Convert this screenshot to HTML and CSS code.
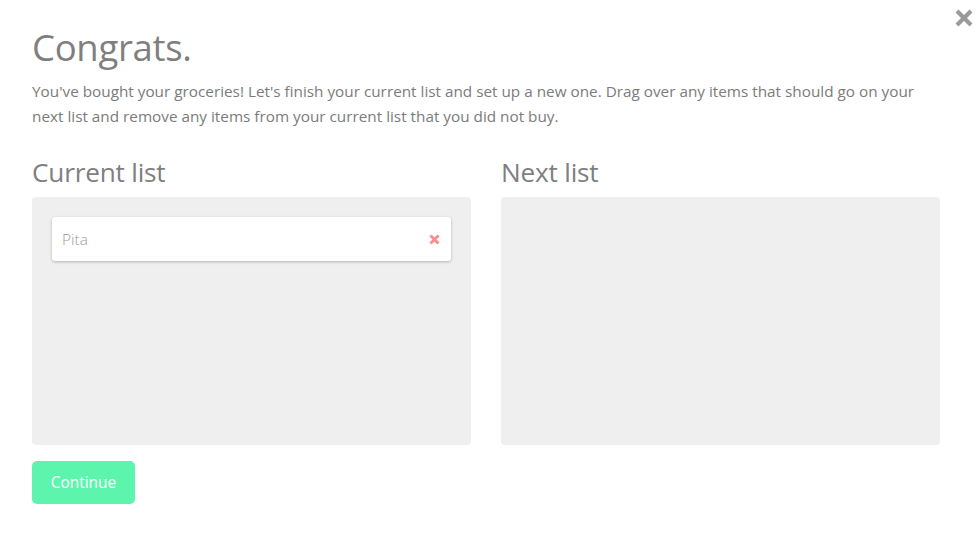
FILE: index.html
```html
<!DOCTYPE html>
<html>
<head>
<meta charset="utf-8">
<link rel="stylesheet" href="styles.css">
</head>
<body>
<div class="modal">
  <button class="close" aria-label="Close">
    <svg width="18" height="18" viewBox="0 0 18 18"><path d="M2 2 L16 16 M16 2 L2 16" stroke="#9a9a9a" stroke-width="4.2" stroke-linecap="butt"/></svg>
  </button>
  <h1 class="title">Congrats.</h1>
  <p class="intro">You've bought your groceries! Let's finish your current list and set up a new one. Drag over any items that should go on your next list and remove any items from your current list that you did not buy.</p>
  <div class="lists">
    <section class="list">
      <h2 class="list-title">Current list</h2>
      <div class="list-box">
        <div class="item">
          <span class="item-name">Pita</span>
          <svg class="item-remove" width="11" height="11" viewBox="0 0 11 11"><path d="M1.5 1.5 L9.5 9.5 M9.5 1.5 L1.5 9.5" stroke="#ff8c8c" stroke-width="3"/></svg>
        </div>
      </div>
    </section>
    <section class="list">
      <h2 class="list-title">Next list</h2>
      <div class="list-box"></div>
    </section>
  </div>
  <button class="continue">Continue</button>
</div>
</body>
</html>
```

FILE: styles.css
```css
html, body {
  margin: 0;
  padding: 0;
  background: #fff;
}
body {
  font-family: "Open Sans", "Noto Sans", sans-serif;
  color: #7b7b7b;
}
.modal {
  position: relative;
  width: 908px;
  padding: 24px 39px 0 32px;
}
.close {
  position: absolute;
  top: 9px;
  right: 6px;
  border: 0;
  background: none;
  padding: 0;
  width: 18px;
  height: 18px;
  cursor: pointer;
}
.close svg { display: block; }
.title {
  margin: 0;
  font-size: 36.5px;
  font-weight: 400;
  line-height: 46px;
  color: #7f7f7f;
  letter-spacing: -0.3px;
}
.intro {
  margin: 9px 0 0;
  font-size: 15.3px;
  line-height: 25px;
  color: #7b7b7b;
}
.lists {
  display: flex;
  gap: 30px;
  margin-top: 26px;
}
.list {
  flex: 1;
}
.list-title {
  margin: 0 0 8px;
  font-size: 26.2px;
  font-weight: 400;
  line-height: 34px;
  color: #7f7f7f;
  letter-spacing: -0.2px;
}
.list-box {
  background: #efefef;
  border-radius: 4px;
  height: 248px;
  padding: 20px;
  box-sizing: border-box;
}
.item {
  display: flex;
  align-items: center;
  justify-content: space-between;
  height: 44px;
  background: #fff;
  border-radius: 3px;
  box-shadow: 0 1px 3px rgba(0,0,0,0.25);
  padding: 0 11px 0 10px;
}
.item-name {
  font-size: 15.4px;
  font-weight: 300;
  color: #9b9b9b;
}
.item-remove { display: block; }
.continue {
  margin-top: 16px;
  width: 103px;
  height: 43px;
  border: 0;
  border-radius: 5px;
  background: #5df5ae;
  color: #fff;
  font-family: "Open Sans", "Noto Sans", sans-serif;
  font-size: 15.4px;
  padding: 0;
  cursor: pointer;
}
```
